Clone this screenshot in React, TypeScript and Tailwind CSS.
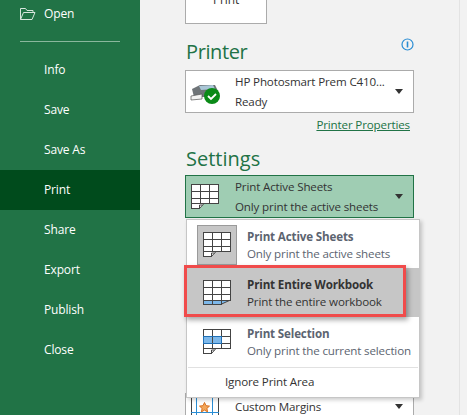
import { ReactNode } from 'react';

const NAV = ['Info', 'Save', 'Save As', 'Print', 'Share', 'Export', 'Publish', 'Close'];

function SheetIcon({ fill }: { fill?: 'bottom' | 'selection' }) {
    const c = '#444';
    if (fill === 'bottom') {
        return (
            <svg width="28" height="25" viewBox="0 0 28 25" fill="none" shapeRendering="crispEdges">
                <path d="M.5.5h27v19.5h-27z" fill="#fff" />
                <path d="M1 20h26l-9 4.5H1z" fill="#7db8ea" />
                <path d="M.5.5h27v19.5H.5zM.5 7.5h27M.5 14h27M9.5.5v24M18.5.5v24M.5 20v4.5h17" stroke={c} />
                <path d="M17.5 24.5l10-4.5" stroke={c} shapeRendering="auto" />
            </svg>
        );
    }
    return (
        <svg width="28" height="25" viewBox="0 0 28 25" fill="none" shapeRendering="crispEdges">
            <path d="M.5.5h27v19H13l-4 5H.5z" fill="#fff" />
            {fill === 'selection' && <rect x="0.5" y="7.5" width="18" height="6.5" fill="#7db8ea" />}
            <path d="M.5.5h27v19H.5zM.5 7.5h27M.5 14h27M9.5.5v19M18.5.5v19M.5 19.5v5h8" stroke={c} />
            {fill === 'selection' && <rect x="0.5" y="7.5" width="18" height="6.5" stroke="#1f6fb5" />}
            <path d="M8.5 24.5l4.5-5M8.5 24v-3h3" stroke={c} shapeRendering="auto" />
        </svg>
    );
}

function Caret() {
    return (
        <svg width="8" height="5" viewBox="0 0 8 5">
            <path d="M0 0h8L4 5z" fill="#333" />
        </svg>
    );
}

function MenuRow({ icon, title, sub, className, subColor }: { icon: ReactNode; title: string; sub: string; className: string; subColor: string }) {
    return (
        <div className={`flex items-center ${className}`}>
            <div className="w-[60px] flex justify-center shrink-0">{icon}</div>
            <div className="text-[11.6px] leading-[17px] whitespace-nowrap">
                <div className={`font-bold ${subColor}`}>{title}</div>
                <div className={subColor}>{sub}</div>
            </div>
        </div>
    );
}

export default function App() {
    return (
        <div className="w-[467px] h-[415px] overflow-hidden flex bg-[#f2f2f2] text-[#333] font-['Open_Sans',_'Noto_Sans',sans-serif] tracking-[-0.15px]">
            {/* Backstage nav */}
            <div className="w-[140px] shrink-0 bg-[#217346] text-white text-[12px]">
                <div className="h-[28px] flex items-center pl-[20px] gap-[8px]">
                    <svg width="16" height="12" viewBox="0 0 16 12" fill="none" stroke="#d8e6dd">
                        <path d="M.5 11.5V.5h5l1.5 2h6v2M.5 11.5h11.5l3-7H3.5z" />
                    </svg>
                    <span>Open</span>
                </div>
                <div className="h-px w-[100px] ml-[20px] mt-[13px] mb-[8px] bg-[#8ab79d]" />
                {NAV.map(n => (
                    <div key={n} className={`h-[40px] flex items-center pl-[44px] ${n === 'Print' ? 'bg-[#004b1c]' : ''}`}>{n}</div>
                ))}
            </div>

            {/* Print settings */}
            <div className="relative flex-1 pl-[45px]">
                <div className="w-[82px] h-[24px] bg-white border border-[#ababab] border-t-0 flex justify-center overflow-hidden text-[12px]">
                    <span className="-mt-[9px]">Print</span>
                </div>

                <div className="w-[229px] mt-[14px] h-[32px] relative text-[20px] leading-[28px] text-[#217346] tracking-[-0.4px] pl-px">
                    Printer
                    <svg className="absolute right-0 top-0" width="13" height="13" viewBox="0 0 13 13" fill="none">
                        <circle cx="6.5" cy="6.5" r="5.5" stroke="#2a8dd4" strokeWidth="1.2" />
                        <path d="M6.5 3.5v6" stroke="#2a8dd4" strokeWidth="1.6" />
                    </svg>
                </div>
                <div className="w-[229px] h-[43px] bg-white border border-[#ababab] flex items-center text-[11.6px]">
                    <div className="w-[49px] shrink-0 pl-[4px]">
                        <svg width="32" height="24" viewBox="0 0 32 24">
                            <path d="M2 9l8-4h15l3 6v6H4z" fill="#6f7478" />
                            <path d="M9 6l14-1 2 4-14 1z" fill="#a9c6d6" />
                            <path d="M1 16l11-2v5l-11 1z" fill="#f4f4f4" stroke="#555" strokeWidth=".7" />
                            <circle cx="22" cy="16" r="8" fill="#0a8a17" />
                            <path d="M18 16l3 3 5-5" fill="none" stroke="#fff" strokeWidth="1.8" />
                        </svg>
                    </div>
                    <div className="leading-[20px] flex-1 whitespace-nowrap">
                        <div>HP Photosmart Prem C410...</div>
                        <div>Ready</div>
                    </div>
                    <div className="pr-[10px] flex"><Caret /></div>
                </div>
                <div className="w-[225px] text-right mt-[3px] text-[11.6px] leading-[17px] text-[#217346] underline">Printer Properties</div>

                <div className="mt-[12px] h-[30px] text-[20px] leading-[28px] text-[#217346] tracking-normal pl-px">Settings</div>
                <div className="w-[229px] h-[43px] bg-[#9fcdb3] border border-[#217346] flex items-center text-[11.6px]">
                    <div className="w-[49px] shrink-0 pl-[5px]"><SheetIcon /></div>
                    <div className="leading-[20px] flex-1 whitespace-nowrap">
                        <div>Print Active Sheets</div>
                        <div>Only print the active sheets</div>
                    </div>
                    <div className="pr-[10px] flex"><Caret /></div>
                </div>

                <div className="w-[229px] h-[43px] mt-[175px] bg-white border border-[#ababab] flex items-start text-[11.6px]">
                    <div className="w-[49px] shrink-0 pl-[5px]">
                        <svg width="29" height="24" viewBox="0 0 29 24" fill="none" shapeRendering="crispEdges">
                            <path d="M.5 0v24M27.5 0v24" stroke="#444" />
                            <path d="M5.5 0v24M21.5 0v24M0 18.5h28" stroke="#2a8dd4" />
                            <path d="M13.5 8.5l1.5 3.2 3.5.4-2.6 2.3.7 3.5-3.1-1.8-3.1 1.8.7-3.5-2.6-2.3 3.5-.4z" fill="#f2a65a" stroke="#d9701f" shapeRendering="auto" />
                        </svg>
                    </div>
                    <div className="flex-1 whitespace-nowrap pt-[4px] leading-[17px]">Custom Margins</div>
                    <div className="pr-[10px] pt-[10px] flex"><Caret /></div>
                </div>

                {/* Open dropdown */}
                <div className="absolute left-[46px] top-[219px] w-[234px] h-[179px] bg-white border border-[#c6c6c6] shadow-[2px_2px_4px_rgba(0,0,0,0.2)] pt-[1px]">
                    <MenuRow
                        className="h-[47px]"
                        subColor="text-[#5c6470]"
                        title="Print Active Sheets"
                        sub="Only print the active sheets"
                        icon={<div className="w-[40px] h-[40px] bg-[#c6c6c6] border border-[#9a9a9a] flex items-center justify-center"><SheetIcon /></div>}
                    />
                    <MenuRow
                        className="h-[49px] w-[232px] bg-[#c6c6c6]"
                        subColor="text-[#333]"
                        title="Print Entire Workbook"
                        sub="Print the entire workbook"
                        icon={<SheetIcon fill="bottom" />}
                    />
                    <MenuRow
                        className="h-[49px]"
                        subColor="text-[#5c6470]"
                        title="Print Selection"
                        sub="Only print the current selection"
                        icon={<SheetIcon fill="selection" />}
                    />
                    <div className="h-px mx-[1px] mt-[1px] bg-[#e1e1e1]" />
                    <div className="pl-[38px] h-[28px] flex items-center text-[11.6px]">Ignore Print Area</div>
                </div>

                {/* Red highlight */}
                <div className="absolute left-[44px] top-[265px] w-[222px] h-[52px] border-[3px] border-[#f04b4b] shadow-[2px_3px_5px_rgba(0,0,0,0.35)]" />

                {/* Right edge rule */}
                <div className="absolute right-[7px] top-0 bottom-0 w-px bg-[#e3e3e3]" />
            </div>
        </div>
    );
}
